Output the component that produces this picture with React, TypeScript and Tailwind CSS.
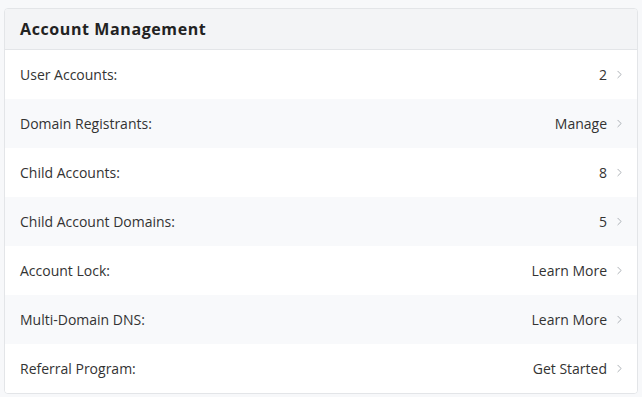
import { ChevronRight } from "lucide-react";

const rows = [
  { label: "User Accounts:", value: "2" },
  { label: "Domain Registrants:", value: "Manage" },
  { label: "Child Accounts:", value: "8" },
  { label: "Child Account Domains:", value: "5" },
  { label: "Account Lock:", value: "Learn More" },
  { label: "Multi-Domain DNS:", value: "Learn More" },
  { label: "Referral Program:", value: "Get Started" },
];

export default function App() {
  return (
    <div className="min-h-[397px] bg-[#f7f8fa] pt-2 px-1 font-['Open_Sans',sans-serif]">
      <div className="w-[634px] border border-[#e3e5e8] rounded-[4px] bg-white overflow-hidden">
        {/* Header */}
        <div className="h-[41px] flex items-center px-[15px] bg-[#f3f4f6] border-b border-[#e3e5e8]">
          <h2 className="text-[16px] font-bold text-[#222] tracking-[0.6px]">Account Management</h2>
        </div>

        {rows.map((r, i) => (
          <div
            key={r.label}
            className={`h-[49px] flex items-center pl-[15px] pr-[11px] text-[14px] text-[#333] ${
              i % 2 === 1 ? "bg-[#f8f9fb]" : "bg-white"
            }`}
          >
            <span>{r.label}</span>
            <span className="ml-auto">{r.value}</span>
            <ChevronRight className="ml-[6px] w-[13px] h-[13px] text-[#a0a6ac]" strokeWidth={1.6} />
          </div>
        ))}
      </div>
    </div>
  );
}
